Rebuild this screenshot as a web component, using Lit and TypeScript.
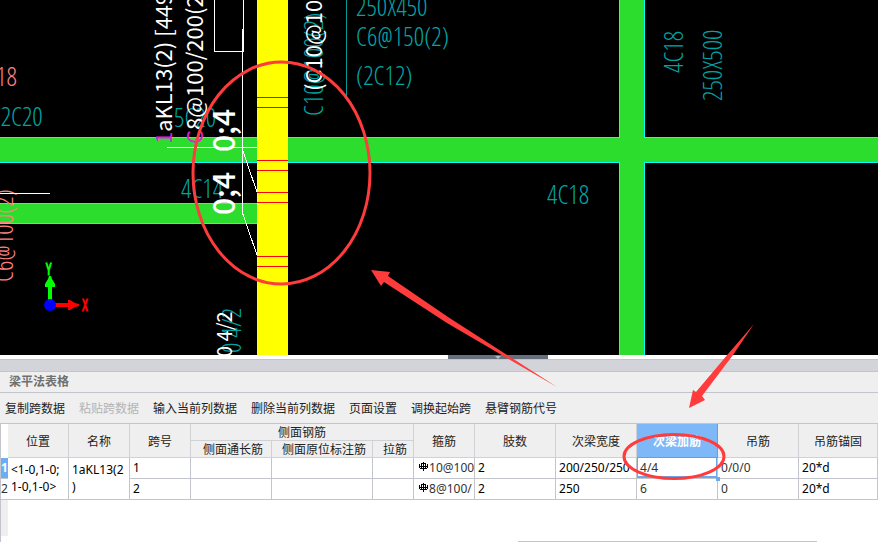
import { LitElement, html, svg, css } from "lit";
import { customElement } from "lit/decorators.js";

interface Label { t: string; x: number; y: number; k: string; up?: boolean }

const LABELS: Label[] = [
  { t: "18", x: -4, y: 86, k: "thin pink" },
  { t: "@2C20", x: -15, y: 126, k: "thin" },
  { t: "5C20", x: 174, y: 127, k: "thin" },
  { t: "4C14", x: 181, y: 198, k: "thin" },
  { t: "250X450", x: 356, y: 16, k: "thin" },
  { t: "C6@150(2)", x: 356, y: 46, k: "thin" },
  { t: "(2C12)", x: 356, y: 85, k: "thin" },
  { t: "4C18", x: 547, y: 204, k: "thin" },
  { t: "4C18", x: 683, y: 73, k: "thin", up: true },
  { t: "250X500", x: 722, y: 101, k: "thin", up: true },
  { t: "C10@100(2)", x: 323, y: 116, k: "thin", up: true },
  { t: "0 4/2", x: 241, y: 353, k: "thin", up: true },
  { t: "C6@100(2)", x: 13, y: 282, k: "thin pink", up: true },
  { t: "1aKL13(2) [449", x: 172, y: 144, k: "mark", up: true },
  { t: "C8@100/200(2)", x: 203, y: 144, k: "mark", up: true },
  { t: "(C10@100", x: 322, y: 91, k: "mark plain", up: true },
  { t: "0 4/2", x: 232, y: 357, k: "mark small", up: true },
  { t: "0;4", x: 235, y: 152, k: "mark large", up: true },
  { t: "0;4", x: 235, y: 215, k: "mark large", up: true },
];

@customElement("beam-drawing")
export class BeamDrawing extends LitElement {
  static styles = css`
    :host { display: block; background: #000; overflow: hidden; }
    svg { display: block; width: 100%; height: 100%; }
    .beam { fill: #2ddd2d; }
    .edge { fill: #00ffff; }
    .main { fill: #ffff00; }
    .bar { fill: #ff0000; }
    .line { fill: none; stroke: #fff; stroke-width: 1; shape-rendering: crispEdges; }
    .leader { stroke: #009c9c; }
    .thin { font: 300 26px "Open Sans Condensed Light", "Liberation Sans Narrow", sans-serif; fill: #00a4a4; }
    .pink { fill: #ff8080; }
    .mark { font: 400 22px "Noto Sans CJK SC", sans-serif; fill: #fff; }
    .small { font-size: 20px; }
    .large { font-size: 30px; font-weight: 500; }
    .first { fill: #e020e0; }
    .axis { font: 400 16px "Open Sans Condensed Light", "Liberation Sans", sans-serif; stroke-width: 1; }
    .green { fill: #00ff00; }
    .red { fill: #ff0000; }
    .blue { fill: #0000ff; }
  `;

  private label(l: Label) {
    const place = `translate(${l.x} ${l.y})${l.up ? " rotate(-90)" : ""}`;
    return svg`<text class=${l.k} transform=${place}>${l.k === "mark"
      ? svg`<tspan class="first">${l.t[0]}</tspan>${l.t.slice(1)}`
      : l.t}</text>`;
  }

  render() {
    return html`<svg role="img" aria-label="梁平面图">
      <rect class="edge" y="137" width="100%" height="26"></rect>
      <rect class="edge" y="203" width="257" height="21"></rect>
      <rect class="edge" x="619" width="26" height="100%"></rect>
      <rect class="beam" y="138" width="100%" height="24"></rect>
      <rect class="beam" y="204" width="257" height="19"></rect>
      <rect class="beam" x="620" width="24" height="100%"></rect>
      ${LABELS.filter((l) => l.k.startsWith("thin")).map((l) => this.label(l))}
      <rect class="main" x="257" width="31" height="100%"></rect>
      ${[97, 107, 160, 170, 192, 202, 256, 266].map(
        (y) => svg`<rect class="bar" x="257" y=${y} width="31" height="1"></rect>`
      )}
      <path class="line leader" d="M346.500 0V97"></path>
      <path class="line" d="M214.500 0V51.500H243.500V0M242.500 29V213L257 255M242.500 150L257 192M167 147.500H257M0 193.500H50"></path>
      ${LABELS.filter((l) => l.k.startsWith("mark")).map((l) => this.label(l))}
      <path class="green" d="M48 300V287H45V284L48 279L49 276H51L52 279L55 284V287H52V300Z"></path>
      <path class="red" d="M55 303H68V300H70L75 303L79 304V306L75 307L70 310H68V307H55Z"></path>
      <circle class="blue" cx="50" cy="305" r="6"></circle>
      <text class="axis green" x="46" y="275" stroke="#0f0">Y</text>
      <text class="axis red" x="82" y="311" stroke="#f00">X</text>
    </svg>`;
  }
}

@customElement("beam-table")
export class BeamTable extends LitElement {
  static styles = css`
    :host { display: flex; flex-direction: column; background: #fff; color: #222; font: 12px/18px "Noto Sans", "Noto Sans CJK SC", sans-serif; }
    .grip { flex: none; height: 4px; display: flex; justify-content: center; border-bottom: 1px solid #c3c5cc; padding-left: 118px; }
    .grip button { width: 100px; height: 4px; margin: 0; padding: 0; border: 0; background: #65707c; display: flex; justify-content: center; }
    .grip svg { display: block; }
    .strip { flex: none; height: 11px; background: #d3d4da; border-bottom: 1px solid #c3c5cc; }
    h2 { flex: none; margin: 0; padding: 0 9px 2px; background: #efefef; border-bottom: 1px solid #c3c5cc; font: 700 12px/18px "Noto Sans CJK SC", sans-serif; color: #707070; }
    .tools { flex: none; display: flex; gap: 14px; height: 30px; padding-left: 5px; background: #efefef; border-bottom: 1px solid #c3c5cc; overflow: hidden; }
    .tools button { flex: none; border: 0; padding: 0; background: none; font: 12px/28px "Noto Sans CJK SC", sans-serif; color: #222; }
    .tools button:disabled { color: #b4b4b4; }
    .sheet { flex: 1; display: flex; flex-direction: column; overflow: hidden; border-left: 1px solid #c3c5cc; }
    .gutter { flex: 1; width: 7px; background: #efefef; margin-bottom: 5px; }
    .scroll { flex: none; height: 1px; width: 34%; margin-left: 59%; background: #c3c5cc; }
    table { width: 100%; table-layout: fixed; border-collapse: separate; border-spacing: 0; }
    .c7 { width: 7px; } .c41 { width: 41px; } .c61 { width: 61px; } .c81 { width: 81px; } .c101 { width: 101px; }
    th, td { box-sizing: border-box; padding: 0; border: 0 solid #c3c5cc; border-width: 0 1px 1px 0; overflow: hidden; white-space: nowrap; }
    th { background: #efefef; font: 12px/16px "Noto Sans CJK SC", sans-serif; border-color: #d0d1d5; text-align: center; }
    .h16 { height: 16px; }
    .sub th { padding-left: 4px; }
    .corner { background: #fff; border: 0; }
    td { height: 21px; padding-left: 3px; color: #000; vertical-align: middle; }
    .wrap { line-height: 17px; vertical-align: top; padding-top: 3px; }
    td.num { border-right: 0; padding: 0; color: #333; text-align: center; }
    td.on { background: #6aaef5; color: #fff; font-weight: 700; }
    th.sel { background: #7fb8f8; color: #fff; font-weight: 700; border-color: #5ba0e8; }
    .soft { color: #333; }
    .cell { position: relative; overflow: visible; box-shadow: inset 1px 0 #6aaaea, inset -1px -2px #6aaaea; }
    .cell::after { content: ""; position: absolute; right: -3px; bottom: -3px; width: 4px; height: 4px; background: #6aaaea; }
    .rebar { display: inline-block; vertical-align: 1px; margin: 0 0 0 2px; }
    .rebar path { fill: none; stroke: #000; shape-rendering: crispEdges; }
  `;

  private rebar = html`<svg class="rebar" width="10" height="9" viewBox="0 0 10 9" aria-hidden="true">
    <path d="M4.500 0V9M2.500 1V7M6.500 1V7M2 1.500H7M1 6.500H8M0.500 2V6M8.500 2V6M0 4.500H9"></path></svg>`;

  render() {
    const tools = ["复制跨数据", "粘贴跨数据", "输入当前列数据", "删除当前列数据", "页面设置", "调换起始跨", "悬臂钢筋代号"];
    const cols = [7, 61, 61, 61, 81, 101, 41, 61, 81, 81, 81, 81];
    return html`
      <div class="grip"><button aria-label="收起"><svg width="6" height="4"><path d="M0 1H6L3 4Z" fill="#b8bdc4"></path></svg></button></div>
      <div class="strip"></div>
      <h2>梁平法表格</h2>
      <div class="tools">${tools.map((t, i) => html`<button ?disabled=${i === 1}>${t}</button>`)}</div>
      <div class="sheet">
        <table>
          <colgroup>${cols.map((c) => html`<col class="c${c}">`)}<col></colgroup>
          <thead>
            <tr>
              <th class="corner h16" rowspan="2"></th>
              <th rowspan="2">位置</th><th rowspan="2">名称</th><th rowspan="2">跨号</th>
              <th class="h16" colspan="3">侧面钢筋</th>
              <th rowspan="2">箍筋</th><th rowspan="2">肢数</th><th rowspan="2">次梁宽度</th>
              <th class="sel" rowspan="2">次梁加筋</th><th rowspan="2">吊筋</th><th rowspan="2">吊筋锚固</th>
            </tr>
            <tr class="sub"><th>侧面通长筋</th><th>侧面原位标注筋</th><th>拉筋</th></tr>
          </thead>
          <tbody>
            <tr>
              <td class="num on">1</td>
              <td class="wrap" rowspan="2">&lt;1-0,1-0;<br>1-0,1-0&gt;</td>
              <td class="wrap" rowspan="2">1aKL13(2<br>)</td>
              <td>1</td><td></td><td></td><td></td>
              <td class="soft">${this.rebar}10@100</td><td>2</td><td>200/250/250</td>
              <td class="soft cell">4/4</td><td class="soft">0/0/0</td><td>20*d</td>
            </tr>
            <tr>
              <td class="num">2</td><td>2</td><td></td><td></td><td></td>
              <td class="soft">${this.rebar}8@100/</td><td>2</td><td>250</td>
              <td class="soft">6</td><td class="soft">0</td><td>20*d</td>
            </tr>
          </tbody>
        </table>
        <div class="gutter"></div>
        <div class="scroll"></div>
      </div>`;
  }
}

@customElement("app-root")
export class AppRoot extends LitElement {
  static styles = css`
    :host { display: flex; flex-direction: column; position: relative; min-height: 100vh; overflow: hidden; }
    beam-drawing { flex: 2 0 355px; }
    beam-table { flex: 1 0 187px; }
    .notes { position: absolute; inset: 0; width: 100%; height: 100%; pointer-events: none; }
    .ring { fill: none; stroke: #ff3b3b; stroke-width: 3; }
    .arrow { fill: #ff3b3b; }
  `;
  render() {
    return html`
      <beam-drawing></beam-drawing>
      <beam-table></beam-table>
      <svg class="notes" aria-hidden="true">
        <ellipse class="ring" cx="281.500" cy="173" rx="88.500" ry="111"></ellipse>
        <ellipse class="ring" cx="674" cy="456.500" rx="50" ry="22"></ellipse>
        <path class="arrow" d="M371 270L390 272L388 276L448 317L504 353L557 387L500 354L447 323L384 282L381 286Z"></path>
        <path class="arrow" d="M689 408L693 390L696 392L728 354L754 324L733 355L702 396L705 400Z"></path>
      </svg>`;
  }
}
